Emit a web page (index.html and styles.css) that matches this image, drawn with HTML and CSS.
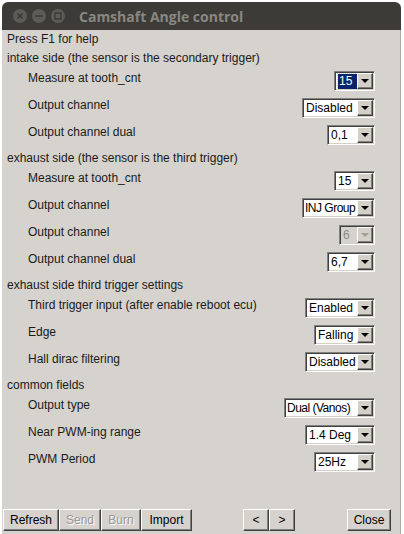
FILE: index.html
```html
<!DOCTYPE html>
<html lang="en">
<head>
    <meta charset="UTF-8">
    <meta name="viewport" content="width=device-width, initial-scale=1.0">
    <title>Camshaft Angle control</title>
    <link rel="stylesheet" href="styles.css">
</head>
<body>
    <div class="window">
        <div class="titlebar">
            <div class="controls">
                <span class="ctl">
                    <svg width="14" height="14" viewBox="0 0 14 14"><path d="M4.5 4.5 L9.5 9.5 M9.5 4.5 L4.5 9.5" stroke="#3a3935" stroke-width="1.6"/></svg>
                </span>
                <span class="ctl">
                    <svg width="14" height="14" viewBox="0 0 14 14"><path d="M3.5 7 H10.5" stroke="#3a3935" stroke-width="1.6"/></svg>
                </span>
                <span class="ctl">
                    <svg width="14" height="14" viewBox="0 0 14 14"><rect x="4" y="4" width="6" height="6" fill="none" stroke="#3a3935" stroke-width="1.4"/></svg>
                </span>
            </div>
            <span class="title">Camshaft Angle control</span>
        </div>

        <div class="content">
            <div class="help">Press F1 for help</div>

            <div class="section">intake side (the sensor is the secondary trigger)</div>
            <div class="row">
                <span class="label">Measure at tooth_cnt</span>
                <div class="combo w41"><span class="value"><span class="sel">15</span></span><span class="arrow"></span></div>
            </div>
            <div class="row">
                <span class="label">Output channel</span>
                <div class="combo w73"><span class="value">Disabled</span><span class="arrow"></span></div>
            </div>
            <div class="row">
                <span class="label">Output channel dual</span>
                <div class="combo w48"><span class="value">0,1</span><span class="arrow"></span></div>
            </div>

            <div class="section">exhaust side (the sensor is the third trigger)</div>
            <div class="row">
                <span class="label">Measure at tooth_cnt</span>
                <div class="combo w41"><span class="value">15</span><span class="arrow"></span></div>
            </div>
            <div class="row">
                <span class="label">Output channel</span>
                <div class="combo w73"><span class="value tight">INJ Group</span><span class="arrow"></span></div>
            </div>
            <div class="row">
                <span class="label">Output channel</span>
                <div class="combo w36 disabled"><span class="value">6</span><span class="arrow"></span></div>
            </div>
            <div class="row">
                <span class="label">Output channel dual</span>
                <div class="combo w48"><span class="value">6,7</span><span class="arrow"></span></div>
            </div>

            <div class="section">exhaust side third trigger settings</div>
            <div class="row">
                <span class="label">Third trigger input (after enable reboot ecu)</span>
                <div class="combo w70"><span class="value">Enabled</span><span class="arrow"></span></div>
            </div>
            <div class="row">
                <span class="label">Edge</span>
                <div class="combo w61"><span class="value">Falling</span><span class="arrow"></span></div>
            </div>
            <div class="row">
                <span class="label">Hall dirac filtering</span>
                <div class="combo w70"><span class="value">Disabled</span><span class="arrow"></span></div>
            </div>

            <div class="section">common fields</div>
            <div class="row">
                <span class="label">Output type</span>
                <div class="combo w91"><span class="value tight">Dual (Vanos)</span><span class="arrow"></span></div>
            </div>
            <div class="row">
                <span class="label">Near PWM-ing range</span>
                <div class="combo w70"><span class="value">1.4 Deg</span><span class="arrow"></span></div>
            </div>
            <div class="row">
                <span class="label">PWM Period</span>
                <div class="combo w61"><span class="value">25Hz</span><span class="arrow"></span></div>
            </div>

            <div class="buttons">
                <div class="group">
                    <button class="btn b-refresh">Refresh</button>
                    <button class="btn b-send" disabled>Send</button>
                    <button class="btn b-burn" disabled>Burn</button>
                    <button class="btn b-import">Import</button>
                </div>
                <div class="group nav">
                    <button class="btn b-nav">&lt;</button>
                    <button class="btn b-nav">&gt;</button>
                </div>
                <button class="btn b-close">Close</button>
            </div>
        </div>
    </div>
</body>
</html>
```

FILE: styles.css
```css
body {
    margin: 0;
    padding: 0;
    background-color: #ffffff;
    font-family: "Liberation Sans", Arial, sans-serif;
    font-size: 12px;
    color: #1a1a1a;
}
.window {
    margin: 2px 0 0 2px;
    width: 399px;
    height: 532px;
    display: flex;
    flex-direction: column;
}
.titlebar {
    height: 28px;
    background-color: #3c3b37;
    border-radius: 6px 6px 0 0;
    display: flex;
    align-items: center;
    padding-left: 11px;
}
.controls {
    display: flex;
    gap: 5px;
}
.ctl {
    width: 14px;
    height: 14px;
    border-radius: 50%;
    background-color: #5c5b57;
    display: flex;
}
.title {
    margin-left: 14px;
    font-family: "Open Sans", "DejaVu Sans", sans-serif;
    font-weight: bold;
    font-size: 14px;
    color: #8a8781;
}
.content {
    flex: 1;
    background-color: #d6d2cd;
    border-right: 1px solid #aeaaa4;
    display: flex;
    flex-direction: column;
}
.help {
    height: 18px;
    line-height: 18px;
    padding-left: 5px;
}
.section {
    height: 19px;
    line-height: 20px;
    padding-left: 5px;
}
.row {
    height: 27px;
    display: flex;
    align-items: flex-start;
    justify-content: space-between;
    padding: 0 25px 0 26px;
}
.label {
    padding-top: 4px;
    line-height: 14px;
}
.combo {
    margin-top: 4px;
    height: 20px;
    box-sizing: border-box;
    border: 1px solid;
    border-color: #808080 #ffffff #ffffff #808080;
    box-shadow: inset 1px 1px 0 #404040, inset -1px -1px 0 #d4d0c8;
    background-color: #ffffff;
    display: flex;
    padding: 1px;
}
.value {
    flex: 1;
    min-width: 0;
    padding-left: 2px;
    line-height: 16px;
    font-size: 12px;
    color: #000;
    white-space: nowrap;
    overflow: hidden;
}
.value.tight {
    padding-left: 1px;
    letter-spacing: -0.5px;
}
.sel {
    display: inline-block;
    background-color: #0a246a;
    color: #ffffff;
    outline: 1px dotted #d8d890;
    padding: 0 1px;
    line-height: 15px;
    width: 17px;
}
.arrow {
    width: 16px;
    flex: none;
    box-sizing: border-box;
    background-color: #d4d0c8;
    border: 1px solid;
    border-color: #ffffff #404040 #404040 #ffffff;
    box-shadow: inset -1px -1px 0 #808080;
    display: flex;
    align-items: center;
    justify-content: center;
}
.arrow::after {
    content: "";
    border-left: 4px solid transparent;
    border-right: 4px solid transparent;
    border-top: 4px solid #000;
    margin: 0 1px 1px 0;
}
.combo.disabled {
    background-color: #d6d2cd;
}
.combo.disabled .value {
    color: #8e8c88;
}
.combo.disabled .arrow::after {
    border-top-color: #a09e9a;
}
.w36 { width: 36px; }
.w41 { width: 41px; }
.w48 { width: 48px; }
.w61 { width: 61px; }
.w70 { width: 70px; }
.w73 { width: 73px; }
.w91 { width: 91px; }
.buttons {
    margin-top: auto;
    display: flex;
    align-items: flex-end;
    padding: 0 9px 3px 1px;
}
.group {
    display: flex;
}
.nav {
    margin-left: 51px;
}
.btn {
    height: 22px;
    box-sizing: border-box;
    font-family: "Liberation Sans", Arial, sans-serif;
    font-size: 12px;
    color: #000;
    background-color: #d6d2cd;
    border: 1px solid;
    border-color: #ffffff #404040 #404040 #ffffff;
    box-shadow: inset -1px -1px 0 #808080;
    padding: 0;
    margin: 0;
}
.btn:disabled {
    color: #9a9894;
    text-shadow: 1px 1px 0 #ffffff;
}
.b-refresh { width: 56px; }
.b-send { width: 42px; }
.b-burn { width: 40px; }
.b-import { width: 51px; }
.b-nav { width: 26px; }
.b-close {
    width: 44px;
    margin-left: auto;
}
```
